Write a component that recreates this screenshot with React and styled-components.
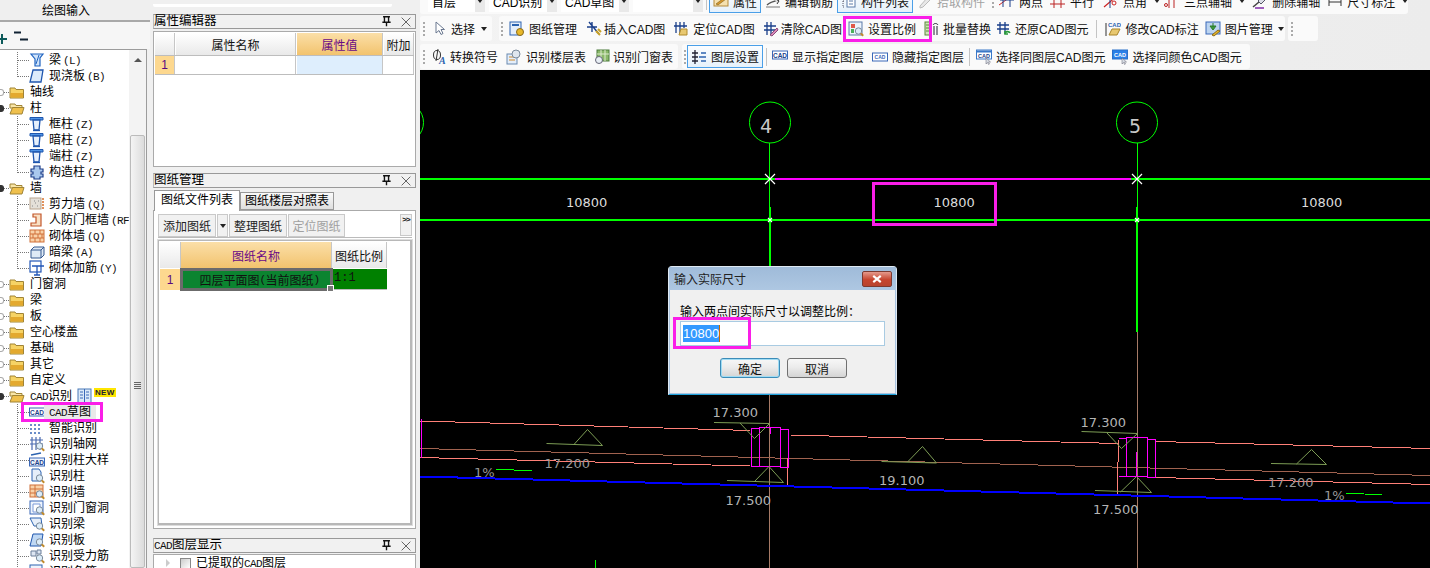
import React from 'react';
import styled, { createGlobalStyle } from 'styled-components';

const SANS = '"Liberation Sans","Noto Sans CJK SC",sans-serif';

const Global = createGlobalStyle`
  * { box-sizing: border-box; }
  html, body { margin: 0; padding: 0; background: #f0f0f0; }
  body { font-family: ${SANS}; font-size: 12px; color: #000; }
`;

const Screen = styled.div`
  position: relative; width: 1430px; height: 568px; overflow: hidden;
  display: grid; grid-template-columns: 150px 270px 1010px; background: #f0f0f0;
`;

/* ---------- icons ---------- */
const Ico = styled.svg`flex: none; display: block;`;
const I = ({ children, s = 16 }) => <Ico width={s} height={s} viewBox="0 0 16 16">{children}</Ico>;

const Mag = () => (
  <g>
    <circle cx="10.5" cy="10" r="3.2" fill="#dcecf8" stroke="#7a8a9a" />
    <path d="M12.8 12.4l2.4 2.4" stroke="#c08a2a" strokeWidth="2" />
  </g>
);
const CadTag = ({ fill = '#fff', ink = '#1a3f8a', y = 5 }) => (
  <g>
    <rect x="0.5" y={y} width="15" height="8" fill={fill} stroke="#3a68b8" />
    <text x="8" y={y + 6.5} fontSize="6.5" fontWeight="700" textAnchor="middle" fill={ink} fontFamily="Liberation Sans">CAD</text>
  </g>
);
const icons = {
  folder: <><path d="M1 4h5l1 1.5h7.5V14H1z" fill="#f6d365" stroke="#a08436" /><rect x="1.5" y="9" width="12.5" height="4.5" fill="#e3a92e" /></>,
  open: <><path d="M1 4h5l1 1.5h6V8H1z" fill="#f9e6a8" stroke="#a08436" /><path d="M1 14l2.5-6.5H15L13 14z" fill="#efc04d" stroke="#a08436" /></>,
  beam: <><path d="M2 2h12l-3 4v8H6V7z" fill="#cfe3fa" stroke="#1f63c0" strokeWidth="1.2" /><path d="M10 3l-3 9" stroke="#1f63c0" /></>,
  slab: <path d="M4 2h10l-2 12H1z" fill="#dcebfb" stroke="#1f56ae" strokeWidth="1.3" />,
  column: <><path d="M1 1.500h13v2.500H1z" fill="#4f94e6" stroke="#1f56ae" /><path d="M4 4h7l-1 10H5z" fill="#e6f0fc" stroke="#1f56ae" strokeWidth="1.3" /><path d="M4 14.500h7" stroke="#1f56ae" strokeWidth="1.3" /></>,
  struct: <path d="M5 2h6v3h3v3h-2v2h2v3h-3v2H5v-2H2v-3h2V8H2V5h3z" fill="#a9c8ee" stroke="#1f3f8a" strokeWidth="1.2" />,
  shear: <><rect x="1" y="2" width="11" height="11" fill="#e4e0d8" stroke="#b9a58e" /><path d="M3 10h1M6 7h1M8 10h1M5 5h1M9 5h1" stroke="#888" /><path d="M14 2v11" stroke="#d9702a" strokeDasharray="2 1" strokeWidth="1.5" /></>,
  door: <path d="M4 2h8v12H2v-3h5V5H4z" fill="#f9e0c4" stroke="#c2562a" strokeWidth="1.2" />,
  brick: <><rect x="1" y="2" width="14" height="12" fill="#f9d2a8" stroke="#d0703a" /><path d="M1 6h14M1 10h14M6 2v4M11 2v4M4 6v4M9 6v4M13 6v4M6 10v4M11 10v4" stroke="#d0703a" /></>,
  hbeam: <><path d="M2 6l3-3h10v8l-3 3H2z" fill="#dfeaf6" stroke="#34598f" /><path d="M2 6h10v8M12 6l3-3" stroke="#34598f" fill="none" /></>,
  rebar: <><rect x="1" y="1" width="11" height="11" fill="#fff" stroke="#2256b6" strokeWidth="1.2" /><path d="M3 6h12M8 6v9M5 15h6" stroke="#2256b6" strokeWidth="1.3" /></>,
  cad: <CadTag y={4} />,
  smart: <path d="M1 5h2M5 5h2M9 5h2M1 9h2M5 9h2M9 9h2M1 13h2M5 13h2M9 13h2" stroke="#3a68b8" strokeWidth="1.6" />,
  gridm: <><path d="M3 1v13M7 1v13M11 1v13M1 4h13M1 8h13" stroke="#4a6ab0" strokeWidth="1.2" /><Mag /></>,
  cadm: <><path d="M2 3l10-2" stroke="#2c63b0" strokeWidth="1.5" /><CadTag y={6} fill="#eef4fc" /></>,
  colm: <><path d="M3 1h7l2 3v9H3z" fill="#e6effa" stroke="#2c63b0" /><Mag /></>,
  wallm: <><rect x="1" y="1" width="13" height="12" fill="#f9d2a8" stroke="#d0703a" /><path d="M1 5h13M1 9h13M6 1v12" stroke="#d0703a" /><Mag /></>,
  doorm: <><rect x="1" y="1" width="13" height="13" fill="#eef4fc" stroke="#3a68b8" /><path d="M4 4h7v8H4z" fill="#fff" stroke="#7a9ad8" /><Mag /></>,
  beamm: <><path d="M1 2h11l1 8-8 0z" fill="#e6effa" stroke="#2c63b0" /><Mag /></>,
  slabm: <><path d="M4 2h10l-2 12H1z" fill="#bfd8f4" stroke="#1f56ae" /><Mag /></>,
  barm: <><path d="M2 3h5v5H2zM8 2h4v4H8z" fill="#dde6f2" stroke="#6a7f9a" /><Mag /></>,
  negm: <><rect x="1" y="1" width="12" height="13" fill="#eef4fc" stroke="#2c63b0" /><path d="M1 5h12" stroke="#2c63b0" /><Mag /></>,
  /* toolbar */
  attr: <><rect x="1" y="3" width="14" height="10" fill="#f5e1b0" stroke="#b58a3a" /><path d="M3 11l8-6 2 1-8 6z" fill="#d99a2e" stroke="#7a5a1a" strokeWidth=".6" /></>,
  steel: <><path d="M2 12c3-3 7-4 12-5" stroke="#555" fill="none" strokeWidth="1.3" /><path d="M9 5l5 3-2 3" stroke="#333" fill="#ddd" /><path d="M1 14h14" stroke="#777" /></>,
  list: <><path d="M2 2v12M2 2h2M2 8h2M2 14h2" stroke="#556" strokeDasharray="1 1" /><rect x="6" y="2" width="8" height="12" fill="#fff" stroke="#5a7aa8" /><path d="M8 5h4M8 8h4M8 11h4" stroke="#5a7aa8" /></>,
  pick: <path d="M3 13l8-9 3 2-8 8-3 1z" fill="#e8e8e8" stroke="#bbb" />,
  twopt: <><path d="M0 12L14 2" stroke="#c22" /><path d="M4 2v12M11 2v12M1 7h14" stroke="#1a3f8a" /></>,
  par: <path d="M4 1v14M11 1v14M0 5h15M0 11h15" stroke="#b22" />,
  ang: <><path d="M1 14L14 3" stroke="#c22" strokeWidth="1.2" /><path d="M7 1v14" stroke="#1a3f8a" /><circle cx="11" cy="10" r="2" fill="none" stroke="#c22" /></>,
  three: <><path d="M5 1v14M10 1v14M1 5h14" stroke="#b22" /><circle cx="2" cy="12" r="1.5" fill="none" stroke="#b22" /></>,
  delaux: <><path d="M1 14l6-5" stroke="#444" strokeWidth="1.6" /><path d="M6 8l6-6 3 3-6 6z" fill="#dcdfe8" stroke="#556" /><path d="M3 15h9" stroke="#8a3ab0" strokeWidth="1.6" /></>,
  dim: <><path d="M2 4v9M14 4v9M2 9h12" stroke="#333" /><circle cx="2" cy="2" r="1" fill="#2a9a3a" /><circle cx="14" cy="2" r="1" fill="#2a9a3a" /></>,
  cursor: <path d="M5 1v11l3-2.500 2 4 2-1-2-4h3.500z" fill="#fff" stroke="#6a7890" />,
  mgr: <><rect x="1" y="1" width="11" height="13" fill="#e4eefa" stroke="#2c63b0" /><path d="M3 4h7" stroke="#2c63b0" strokeWidth="2" /><circle cx="11" cy="11" r="3.500" fill="#e8b82a" stroke="#8a6a1a" /></>,
  insert: <><path d="M3 1l10 12M1 6h10M6 1v10" stroke="#1a3f8a" strokeWidth="1.400" /><path d="M10 10l4 4M12 8l3 3" stroke="#c8a22a" strokeWidth="2" /></>,
  locate: <><path d="M3 1v11M7 1v11M11 1v6M1 5h13" stroke="#1a3f8a" strokeWidth="1.300" /><path d="M8 8h6v6H6z" fill="#e8c870" stroke="#b08a2a" /></>,
  clear: <><path d="M4 1v13M8 1v13M1 5h12M1 9h12" stroke="#1a3f8a" strokeWidth="1.300" /><path d="M7 14l7-7 1 2-6 6z" fill="#d88ab8" stroke="#8a4a7a" /></>,
  scale: <><rect x="1" y="1" width="13" height="13" fill="#eef4fc" stroke="#5a7aa8" /><rect x="3" y="3" width="4" height="4" fill="#e05a4a" /><rect x="3" y="8" width="3" height="4" fill="#4ab05a" /><Mag /></>,
  batch: <><rect x="2" y="1" width="6" height="13" fill="#cfe5b8" stroke="#5a8a3a" /><path d="M3 4h4M3 7h4M3 10h4" stroke="#5a8a3a" /><path d="M11 5v9M14 5v9M10 4c1-2 4-2 5 0" stroke="#223" fill="none" /></>,
  restore: <><path d="M4 1v12M9 1v12M1 4h12M1 8h12" stroke="#1a3f8a" strokeWidth="1.300" /><path d="M9 13c0-3 4-3 5-1M9 10v3h3" stroke="#2a9a3a" strokeWidth="1.600" fill="none" /></>,
  modify: <><text x="3" y="6" fontSize="6" fontWeight="700" fill="#2c63b0" fontFamily="Liberation Sans">CAD</text><path d="M1 2v13" stroke="#333" /><path d="M4 14l3-6h8l-3 6z" fill="#e8c870" stroke="#a8842a" /></>,
  pic: <><rect x="1" y="1" width="14" height="12" fill="#bcd4f0" stroke="#3a68b8" /><path d="M8 2v4M5 5l3 4 3-4z" fill="#3a9a3a" stroke="#2a7a2a" /><path d="M7 14l6-5 2 1-6 5z" fill="#e8b82a" stroke="#8a6a1a" /></>,
  symbol: <><ellipse cx="6" cy="6" rx="3.500" ry="4.500" fill="none" stroke="#333" /><path d="M7 0L5 12" stroke="#333" /><text x="8" y="15" fontSize="10" fontWeight="700" fontStyle="italic" fill="#2c63b0" fontFamily="Liberation Serif">A</text></>,
  floor: <><rect x="1" y="5" width="10" height="10" fill="#e4eefa" stroke="#6a8ab0" /><path d="M3 8h6M3 11h6" stroke="#d08a2a" /><circle cx="10" cy="5" r="4" fill="#dfe6ee" stroke="#7a8a9a" /></>,
  doort: <><rect x="3" y="1" width="12" height="11" fill="#8ab86a" stroke="#4a7a3a" /><path d="M7 1v11M11 1v11M3 5h12" stroke="#dfeccf" /><circle cx="5" cy="11" r="3.500" fill="#e8eef4" stroke="#667" /></>,
  layer: <><path d="M1 4h6M1 8h6M1 12h6M4 1v14" stroke="#223" strokeWidth="1.300" /><path d="M10 4h5M8 8h7M10 12h5" stroke="#2c63b0" strokeWidth="1.300" /></>,
  show: <CadTag y={2} />,
  hide: <g><rect x="0.500" y="4" width="15" height="8" fill="#fff" stroke="#3a68b8" /><text x="8" y="10" fontSize="5" fontWeight="700" textAnchor="middle" fill="#3a68b8" fontFamily="Liberation Sans">CAD</text></g>,
  sell: <><rect x="0.500" y="1" width="15" height="9" fill="#fff" stroke="#3a78c8" /><rect x="1" y="1.500" width="14" height="2" fill="#3a78c8" /><text x="8" y="9" fontSize="5.500" fontWeight="700" textAnchor="middle" fill="#1a3f8a" fontFamily="Liberation Sans">CAD</text><path d="M10 9v6l1.500-1.500 1 2 1-.500-1-2h2z" fill="#d8dde4" stroke="#667" strokeWidth=".5" /></>,
  selc: <><rect x="0.500" y="1" width="15" height="9" fill="#2a80e8" stroke="#2a70c8" /><text x="8" y="8" fontSize="5.500" fontWeight="700" textAnchor="middle" fill="#fff" fontFamily="Liberation Sans">CAD</text><path d="M10 9v6l1.500-1.500 1 2 1-.500-1-2h2z" fill="#d8dde4" stroke="#667" strokeWidth=".5" /></>,
  book: <><rect x="1" y="1" width="13" height="14" fill="#dbe9f8" stroke="#4a7ab8" /><path d="M7.500 1v14M3 4h3M3 7h3M3 10h3M9 4h3M9 7h3M9 10h3" stroke="#3a68b8" /></>,
};
const Icon = ({ n }) => <I>{icons[n]}</I>;

/* ---------- left tree ---------- */
const LeftPane = styled.section`display: flex; flex-direction: column; height: 568px; background: #f0f0f0;`;
const PaneHead = styled.header`
  height: 22px; line-height: 23px; padding-left: 42px; font-size: 12px;
  background: #efefef; border-bottom: 2px solid #a9a9a9;
`;
const TreeTools = styled.div`
  height: 27px; padding-top: 6px; display: flex; align-items: center; gap: 6px; background: #f6f6f6; margin-left: -3px;
`;
const TreeFrame = styled.div`
  display: flex; flex: 1; min-height: 0; border-top: 1px solid #9c9c9c; border-right: 1px solid #9c9c9c; margin-right: 3px; background: #fff;
`;
const TreeList = styled.ul`
  list-style: none; margin: 0; padding: 2px 0 0; width: 129px; overflow: hidden; flex: none; background: #fff;
`;
const TreeRow = styled.li`
  height: 16px; display: flex; align-items: center; white-space: nowrap; font-size: 12px; line-height: 16px;
  padding-left: ${p => (p.$lvl ? '17px' : '0')};
  background-image: ${p => (p.$lvl ? 'repeating-linear-gradient(to bottom,#777 0 1px,transparent 1px 2px)' : 'none')};
  background-size: 1px ${p => (p.$last ? '8px' : '16px')};
  background-position: 17px 0; background-repeat: no-repeat;
`;
const Expander = styled.span`
  flex: none; width: 5px; height: 7px;
  background: ${p => (p.$open ? '#333' : 'transparent')};
  border: 1px solid ${p => (p.$open ? '#333' : '#aaa')};
  border-left: none; margin-left: -1px; border-radius: 0 3px 3px 0;
`;
const Dots = styled.span`
  flex: none; width: ${p => p.$w}px; height: 0; border-top: 1px dotted #777;
`;
const Label = styled.span`
  margin-left: ${p => (p.$sel ? '-1px' : p.$lvl ? '4px' : '5px')}; padding: ${p => (p.$sel ? '0 5px' : '0')};
  background: ${p => (p.$sel ? '#e9e9e9' : 'transparent')};
`;
const Mono = styled.span`
  font-family: "Liberation Mono","DejaVu Sans Mono",monospace; font-size: 11px; letter-spacing: -0.6px; color: #111;
  margin-left: ${p => p.$ml || 0}px;
`;
const NewTag = styled.span`
  margin-left: 1px; margin-top: -7px; height: 9px; padding: 0 1px; background: #ffe600; color: #223;
  font-size: 8px; line-height: 9px; font-weight: 700; letter-spacing: .3px; font-family: ${SANS};
`;
const BookWrap = styled.span`margin-left: 5px; display: flex;`;
const Scroll = styled.div`
  flex: none; width: 17px; background: #f3f3f3; display: flex; flex-direction: column; align-items: center;
`;
const ScrollUp = styled.div`
  margin-top: 8px; width: 0; height: 0; border: 4px solid transparent; border-top: none; border-bottom: 4px solid #555;
`;
const ScrollThumb = styled.div`
  margin-top: 73px; width: 15px; flex: 1; background: linear-gradient(90deg,#f4f4f4,#dcdcdc); border: 1px solid #bbb; border-radius: 2px;
  display: flex; justify-content: center; padding-top: 246px;
`;
const ThumbGrip = styled.div`
  width: 7px; height: 7px; background: repeating-linear-gradient(to bottom,#666 0 1px,transparent 1px 2px);
`;

const L = (text, code) => <>{text}{code && <Mono $ml={2}>{code}</Mono>}</>;
const tree = [
  { l: 1, i: 'beam', t: L('梁', '(L)') }, { l: 1, i: 'slab', t: L('现浇板', '(B)'), last: 1 },
  { l: 0, i: 'folder', t: '轴线' }, { l: 0, i: 'open', t: '柱', o: 1 },
  { l: 1, i: 'column', t: L('框柱', '(Z)') }, { l: 1, i: 'column', t: L('暗柱', '(Z)') }, { l: 1, i: 'column', t: L('端柱', '(Z)') },
  { l: 1, i: 'struct', t: L('构造柱', '(Z)'), last: 1 },
  { l: 0, i: 'open', t: '墙', o: 1 },
  { l: 1, i: 'shear', t: L('剪力墙', '(Q)') }, { l: 1, i: 'door', t: L('人防门框墙', '(RF)') }, { l: 1, i: 'brick', t: L('砌体墙', '(Q)') },
  { l: 1, i: 'hbeam', t: L('暗梁', '(A)') }, { l: 1, i: 'rebar', t: L('砌体加筋', '(Y)'), last: 1 },
  { l: 0, i: 'folder', t: '门窗洞' }, { l: 0, i: 'folder', t: '梁' }, { l: 0, i: 'folder', t: '板' }, { l: 0, i: 'folder', t: '空心楼盖' },
  { l: 0, i: 'folder', t: '基础' }, { l: 0, i: 'folder', t: '其它' }, { l: 0, i: 'folder', t: '自定义' },
  { l: 0, i: 'open', t: <><Mono>CAD</Mono>识别</>, o: 1, badge: 1 },
  { l: 1, i: 'cad', t: <><Mono>CAD</Mono>草图</>, sel: 1 },
  { l: 1, i: 'smart', t: '智能识别' }, { l: 1, i: 'gridm', t: '识别轴网' }, { l: 1, i: 'cadm', t: '识别柱大样' }, { l: 1, i: 'colm', t: '识别柱' },
  { l: 1, i: 'wallm', t: '识别墙' }, { l: 1, i: 'doorm', t: '识别门窗洞' }, { l: 1, i: 'beamm', t: '识别梁' }, { l: 1, i: 'slabm', t: '识别板' },
  { l: 1, i: 'barm', t: '识别受力筋' }, { l: 1, i: 'negm', t: '识别负筋' },
];

const LeftColumn = () => (
  <LeftPane>
    <PaneHead>绘图输入</PaneHead>
    <TreeTools>
      <I s={10}><path d="M8 0v16M0 8h16" stroke="#0d5a5a" strokeWidth="3.200" /></I>
      <I s={16}><path d="M1 1.500h7M7 8.500h8" stroke="#123" strokeWidth="2" /></I>
    </TreeTools>
    <TreeFrame>
      <TreeList>
        {tree.map((r, k) => (
          <TreeRow key={k} $lvl={r.l} $last={r.last}>
            {r.l ? <Dots $w={12} /> : <><Expander $open={r.o} /><Dots $w={5} /></>}
            <Icon n={r.i} />
            <Label $sel={r.sel} $lvl={r.l}>{r.t}</Label>
            {r.badge && <><BookWrap><Icon n="book" /></BookWrap><NewTag>NEW</NewTag></>}
          </TreeRow>
        ))}
      </TreeList>
      <Scroll>
        <ScrollUp />
        <ScrollThumb><ThumbGrip /></ScrollThumb>
      </Scroll>
    </TreeFrame>
  </LeftPane>
);

/* ---------- middle panels ---------- */
const MidPane = styled.section`
  height: 568px; padding: 4px 4px 0 3px; display: flex; flex-direction: column; background: #f0f0f0;
`;
const Sliver = styled.div`height: 3px; width: 239px; background: #fff; border-radius: 0 0 2px 2px; margin-bottom: 7px; flex: none;`;
const DockTitle = styled.div`
  flex: none; height: 15px; line-height: 15px; display: flex; align-items: center; justify-content: space-between;
  border: 1px solid #999; background: #f1f1f1; font-size: 12.5px; padding-right: 4px; white-space: nowrap;
  margin-top: ${p => p.$mt || 0}px; border-left-color: #bbb;
`;
const DockBtns = styled.span`display: flex; align-items: center; gap: 9px;`;
const PropsBody = styled.div`
  flex: none; margin-top: 2px; height: 136px; background: #fff; border: 1px solid #aaa; padding: 1px;
`;
const GridRow = styled.div`
  display: grid; grid-template-columns: ${p => p.$cols}; height: ${p => p.$h}px; column-gap: 1px;
  border-bottom: 1px solid #bdbdbd;
`;
const Head = styled.div`
  display: flex; align-items: center; justify-content: center; font-size: 12px; overflow: hidden; white-space: nowrap;
  color: ${p => (p.$hot ? '#6a0a86' : '#111')};
  background: ${p => (p.$hot ? 'linear-gradient(#fbdfa8,#f2c36e)' : 'linear-gradient(#fff,#e9e9e9)')};
  border-right: 1px solid #c6c6c6;
`;
const Cell = styled.div`
  display: flex; align-items: center; justify-content: ${p => (p.$left ? 'flex-start' : 'center')};
  font-size: 12px; overflow: hidden; white-space: nowrap;
  color: ${p => p.$ink || '#111'}; background: ${p => p.$bg || '#fff'};
  border-right: 1px solid #c6c6c6;
`;
const TabRow = styled.div`flex: none; display: flex; align-items: flex-end; height: 20px; margin-top: 2px;`;
const Tab = styled.div`
  height: ${p => (p.$on ? 21 : 18)}px; margin-bottom: ${p => (p.$on ? -1 : 0)}px; line-height: ${p => (p.$on ? 19 : 17)}px;
  padding: 0 ${p => (p.$on ? 6 : 4)}px; font-size: 12px; position: relative; white-space: nowrap;
  background: ${p => (p.$on ? '#fff' : 'linear-gradient(#fafafa,#dedede)')};
  border: 1px solid #999; border-bottom: ${p => (p.$on ? 'none' : '1px solid #999')}; margin-left: ${p => (p.$on ? 1 : 0)}px;
`;
const DrawBody = styled.div`
  flex: none; height: 319px; background: #fff; border: 1px solid #aaa; padding: 3px 3px 3px 4px; display: flex; flex-direction: column;
`;
const DrawTools = styled.div`
  flex: none; height: 24px; display: flex; justify-content: space-between; border-bottom: 1px solid #bbb;
`;
const BtnGroup = styled.div`display: flex; gap: 1px;`;
const FlatBtn = styled.button`
  height: 23px; padding: 0 4px; font: 12px ${SANS}; border: 1px solid #c9c9c9; background: #f1f1f1;
  color: ${p => (p.disabled ? '#a0a0a0' : '#222')}; display: flex; align-items: center; justify-content: center;
  width: ${p => p.$w}px; white-space: nowrap;
`;
const DownTri = styled.span`
  width: 0; height: 0; border: 3px solid transparent; border-top: 4px solid #222; border-bottom: none; flex: none;
`;
const MoreBtn = styled.div`
  width: 12px; height: 22px; border: 1px solid #c9c9c9; background: #f1f1f1; font: 700 8px/10px "Liberation Sans",sans-serif; letter-spacing: -1px; text-align: center; color: #111;
`;
const DrawGrid = styled.div`
  flex: 1; margin-top: 2px; border: 2px solid #b8b8b8; border-width: 1px 2px 2px 1px; padding: 1px; background: #fff;
  outline: 1px solid #ddd;
`;
const HeadPlain = styled.div`
  display: grid; grid-template-columns: 21px 151px 55px; height: 26px; column-gap: 0;
`;
const DataRow = styled.div`
  display: grid; grid-template-columns: 21px 151px 55px; height: 19px; margin-top: 1px;
`;
const ActiveCell = styled.div`
  display: flex; align-items: center; justify-content: center; background: #0b8430; border: 2px solid #6b6b6b; outline: 1px solid #6b6b6b;
  font-size: 12px; color: #111; white-space: nowrap; position: relative; padding-left: 6px;
`;
const FillHandle = styled.i`
  position: absolute; right: -4px; bottom: -4px; width: 5px; height: 5px; background: #777; border: 1px solid #fff; box-sizing: content-box;
`;
const GreenCell = styled.div`
  background: #008000; font: 12px "Liberation Mono",monospace; padding-left: 2px; line-height: 18px; color: #111; border-bottom: 1px solid #bbb;
`;
const LayerBody = styled.div`
  flex: 1; margin-top: 1px; background: #fff; border: 1px solid #aaa; display: flex; padding: 0 0 0 12px; align-items: flex-start;
`;
const LayerTri = styled.span`
  margin-top: 4px; width: 0; height: 0; border: 4px solid transparent; border-left: 4px solid #ccc; border-right: none; flex: none;
`;
const CheckBox = styled.span`
  margin: 3px 5px 0 10px; width: 11px; height: 11px; border: 1px solid #888; background: linear-gradient(135deg,#ccc,#fff); flex: none;
`;
const LayerText = styled.span`font-size: 12px; line-height: 16px; white-space: nowrap;`;

const PinClose = () => (
  <DockBtns>
    <I s={11}><path d="M3 1h10M5 1v8M11 1v8M2 9h12M8 9v6" stroke="#111" strokeWidth="2" /></I>
    <I s={10}><path d="M1 1l14 14M15 1L1 15" stroke="#444" strokeWidth="1.300" /></I>
  </DockBtns>
);

const MidColumn = () => (
  <MidPane>
    <Sliver />
    <DockTitle>属性编辑器<PinClose /></DockTitle>
    <PropsBody>
      <GridRow $cols="20px 120px 86px 30px" $h={23}>
        <Head /><Head>属性名称</Head><Head $hot>属性值</Head><Head>附加</Head>
      </GridRow>
      <GridRow $cols="20px 120px 86px 30px" $h={19}>
        <Cell $bg="#fdd88f" $ink="#5a0a80">1</Cell><Cell /><Cell $bg="#deeefd" /><Cell />
      </GridRow>
    </PropsBody>
    <DockTitle $mt={6}>图纸管理<PinClose /></DockTitle>
    <TabRow>
      <Tab $on>图纸文件列表</Tab>
      <Tab>图纸楼层对照表</Tab>
    </TabRow>
    <DrawBody>
      <DrawTools>
        <BtnGroup>
          <FlatBtn $w={58}>添加图纸</FlatBtn>
          <FlatBtn $w={11}><DownTri /></FlatBtn>
          <FlatBtn $w={58}>整理图纸</FlatBtn>
          <FlatBtn $w={57} disabled>定位图纸</FlatBtn>
        </BtnGroup>
        <MoreBtn>&gt;&gt;</MoreBtn>
      </DrawTools>
      <DrawGrid>
        <HeadPlain>
          <Head /><Head $hot>图纸名称</Head><Head>图纸比例</Head>
        </HeadPlain>
        <DataRow>
          <Cell $bg="#fdd88f" $ink="#5a0a80">1</Cell>
          <ActiveCell>四层平面图<Mono>(</Mono>当前图纸<Mono>)</Mono><FillHandle /></ActiveCell>
          <GreenCell>1:1</GreenCell>
        </DataRow>
      </DrawGrid>
    </DrawBody>
    <DockTitle $mt={9}><span><Mono>CAD</Mono>图层显示</span><PinClose /></DockTitle>
    <LayerBody>
      <LayerTri /><CheckBox /><LayerText>已提取的<Mono>CAD</Mono>图层</LayerText>
    </LayerBody>
  </MidPane>
);

/* ---------- toolbars ---------- */
const RightPane = styled.section`height: 568px; display: flex; flex-direction: column; overflow: hidden;`;
const Row = styled.div`
  flex: none; height: ${p => p.$h || 28}px; display: flex; align-items: center; background: linear-gradient(90deg,#f3f3f3,#ececec);
  margin-top: ${p => p.$mt || 0}px; padding-top: ${p => p.$pt || 0}px;
`;
const Strip = styled.div`
  flex: none; height: 25px; display: flex; align-items: center; background: #fafafa; border-radius: 3px;
  width: ${p => (p.$w ? `${p.$w}px` : 'auto')}; margin-left: ${p => p.$ml || 0}px; padding-right: ${p => p.$pr || 0}px; padding-left: ${p => p.$pl || 0}px;
`;
const Grip = styled.span`
  flex: none; width: 2px; height: 14px; margin: 0 2px 0 ${p => p.$ml ?? 3}px;
  background: repeating-linear-gradient(to bottom,#aaa 0 2px,transparent 2px 4px);
`;
const Sep = styled.span`flex: none; width: 1px; height: 18px; background: #c4c4c4; margin: 0 ${p => p.$m ?? 3}px;`;
const Tool = styled.div`
  flex: none; height: 23px; display: flex; align-items: center; gap: ${p => p.$gap ?? 4}px; padding: 0 3px; white-space: nowrap; font-size: 12px;
  margin-left: ${p => p.$ml || 0}px;
  color: ${p => (p.$off ? '#a2a2a2' : '#111')};
  border: 1px solid ${p => (p.$on ? '#4a9fe8' : 'transparent')};
  background: ${p => (p.$on ? 'linear-gradient(#fbfdff,#e6f1fb)' : 'transparent')};
`;
const Combo = styled.div`
  flex: none; width: ${p => p.$w}px; height: 22px; background: #fff; display: flex; justify-content: space-between; align-items: center;
  padding-left: 4px; font-size: 12px; margin-left: ${p => p.$ml ?? 4}px; white-space: nowrap;
`;
const ComboBtn = styled.span`
  align-self: stretch; width: 10px; background: #e9e9e9; display: flex; align-items: center; justify-content: center;
`;
const ToolDown = styled(DownTri)`margin-left: ${p => p.$ml ?? 3}px;`;

const T = ({ n, t, ...p }) => <Tool {...p}><Icon n={n} /><span>{t}</span></Tool>;

const Toolbars = () => (
  <>
    <Row $mt={-13}>
      <Strip $pl={4}>
        <Combo $w={57}>首层<ComboBtn><DownTri /></ComboBtn></Combo>
        <Combo $w={68}>CAD识别<ComboBtn><DownTri /></ComboBtn></Combo>
        <Combo $w={68}>CAD草图<ComboBtn><DownTri /></ComboBtn></Combo>
        <Combo $w={70}><span /><ComboBtn><DownTri /></ComboBtn></Combo>
        <Sep />
        <T n="attr" t="属性" $on $ml={-1} />
        <T n="steel" t="编辑钢筋" />
        <T n="list" t="构件列表" $on />
        <T n="pick" t="拾取构件" $off />
        <Grip />
        <T n="twopt" t="两点" $ml={-1} />
        <T n="par" t="平行" $ml={-1} />
        <T n="ang" t="点角" $ml={1} /><ToolDown />
        <T n="three" t="三点辅轴" $ml={0} /><ToolDown />
        <T n="delaux" t="删除辅轴" $ml={3} />
        <T n="dim" t="尺寸标注" $ml={-1} /><ToolDown />
      </Strip>
    </Row>
    <Row $h={27}>
      <Strip $w={72}>
        <Grip />
        <T n="cursor" t="选择" $ml={0} /><ToolDown $ml={2} />
      </Strip>
      <Strip $ml={7} $w={786}>
        <Grip $ml={2} />
        <T n="mgr" t="图纸管理" />
        <T n="insert" t="插入CAD图" $gap={2} $ml={1} />
        <T n="locate" t="定位CAD图" />
        <T n="clear" t="清除CAD图" $gap={2} />
        <T n="scale" t="设置比例" $ml={-2} />
        <T n="batch" t="批量替换" $ml={-1} />
        <T n="restore" t="还原CAD图元" $ml={-3} $gap={3} />
        <Sep $m={4} />
        <T n="modify" t="修改CAD标注" />
        <T n="pic" t="图片管理" $ml={-2} /><ToolDown $ml={1} />
      </Strip>
      <Strip $ml={3} $w={30}><Grip /></Strip>
    </Row>
    <Row $h={28} $pt={1}>
      <Strip $w={258}>
        <Grip />
        <T n="symbol" t="转换符号" $gap={3} />
        <T n="floor" t="识别楼层表" />
        <T n="doort" t="识别门窗表" $gap={3} />
      </Strip>
      <Strip $ml={4} $pr={4}>
        <Grip $ml={2} />
        <T n="layer" t="图层设置" $on $ml={-1} />
        <Sep $m={3} />
        <T n="show" t="显示指定图层" $ml={-2} />
        <T n="hide" t="隐藏指定图层" />
        <Sep $m={1} />
        <T n="sell" t="选择同图层CAD图元" $ml={1} />
        <T n="selc" t="选择同颜色CAD图元" $ml={-1} />
      </Strip>
    </Row>
  </>
);

/* ---------- CAD canvas ---------- */
const Canvas = styled.div`flex: 1; position: relative; background: #000; overflow: hidden;`;
const Drawing = styled.svg`display: block;`;

const SALMON = '#ff8078', BROWN = '#a0624f', MAG = '#ff00ff', OLIVE = '#7d9d55', GRN = '#00ff00', BLUE = '#0000ff';

const Ln = ({ d, c, w = 1 }) => <path d={d} stroke={c} strokeWidth={w} fill="none" shapeRendering="crispEdges" />;
const Thin = ({ d, c = OLIVE }) => <path d={d} stroke={c} strokeWidth="1" fill="none" />;
const Lbl = ({ x, y, t, c = '#b4b4b4' }) => (
  <text x={x} y={y} fill={c} fontSize="13" fontFamily="DejaVu Sans">{t}</text>
);
const Cross = ({ x, y, r, c = '#fff' }) => (
  <path d={`M${x - r} ${y - r}L${x + r} ${y + r}M${x + r} ${y - r}L${x - r} ${y + r}`} stroke={c} strokeWidth="1.200" />
);

const CadDrawing = () => (
  <Drawing width="1010" height="498" viewBox="420 70 1010 498">
    {[403, 770, 1137].map(x => <circle key={x} cx={x} cy="122.500" r="20.500" fill="none" stroke={GRN} strokeWidth="1" />)}
    <text x="760" y="133" fill="#c8c8c8" fontSize="19" fontFamily="DejaVu Sans">4</text>
    <text x="1129" y="133" fill="#c8c8c8" fontSize="19" fontFamily="DejaVu Sans">5</text>

    <Ln d="M420 179H1430" c={GRN} w={2} />
    <Ln d="M420 220H1430" c={GRN} w={2} />
    <Ln d="M775 179H1131" c={MAG} w={2} />
    <Ln d="M769.500 143V208M1137.500 143V208" c={GRN} />
    <Ln d="M770 207V266M1137 207V332" c={GRN} w={2} />
    <Ln d="M769.500 395V568M1137.500 332V568" c="#a67a66" />
    <Cross x={770} y={179} r={5} />
    <Cross x={1137} y={179} r={5} />
    <Cross x={770} y={220} r={2} />
    <Cross x={1137} y={220} r={2} />
    <Lbl x={566} y={207} t="10800" c="#dcdcdc" />
    <Lbl x={933.500} y={207} t="10800" c="#dcdcdc" />
    <Lbl x={1301} y={207} t="10800" c="#dcdcdc" />

    <Ln d="M420 448.500L1430 475.500" c={BROWN} />
    <Ln d="M420 421L750 430.500M790 435L1118 443.500M1156 441.500L1430 448.500" c={SALMON} />
    <Ln d="M420 457.500L750 466M1156 477.500L1430 484.500" c={SALMON} />
    <Ln d="M420 476.500L1430 503.500" c={BLUE} w={2} />
    <Ln d="M787.500 458V485M1117.500 462V494M1118.500 440V462" c={SALMON} />

    <Ln d="M751.500 428.500H759.500V466.500H751.500zM759.500 427.500H780.500V466.500H759.500zM780.500 429.500H788.500V467.500H780.500zM770.500 427V434M421 419V458" c={MAG} />
    <Ln d="M1118.500 476.500H1126.500M1118.500 438.500H1126.500M1126.500 437.500H1147.500V476.500H1126.500zM1147.500 439.500H1155.500V477.500H1147.500zM1136.500 452V477" c={MAG} />

    <Thin d="M714 422.500L769.500 423.500L754.500 438.500L740 423" />
    <Thin d="M727 480.500L783.500 482.500L769 466.500L754 482" />
    <Thin d="M546.500 443.500L602.500 445.500L587.500 429.500L573.500 445" />
    <Thin d="M881.500 461.500L936.500 463L922.500 446.500L907.500 462" />
    <Thin d="M1081.500 431.500L1137.500 433.500L1121.500 448.500L1107 433" />
    <Thin d="M1095 490.500L1151.500 492.500L1136.500 476.500L1120.500 492" />
    <Thin d="M1271 463.500L1326.500 464.500L1311.500 449.500L1296.500 464" />

    <Ln d="M496 469.500L532 470.500" c={GRN} />
    <Ln d="M1346 493.500L1382 494.500" c={GRN} />
    <Ln d="M595.500 560V568" c={GRN} />

    <Lbl x={712.500} y={417} t="17.300" />
    <Lbl x={725.500} y={504.500} t="17.500" />
    <Lbl x={544.500} y={467.500} t="17.200" c="#999" />
    <Lbl x={474} y={477} t="1%" c="#999" />
    <Lbl x={879} y={485} t="19.100" />
    <Lbl x={1080.500} y={427} t="17.300" />
    <Lbl x={1093} y={514} t="17.500" />
    <Lbl x={1268} y={487} t="17.200" c="#999" />
    <Lbl x={1324} y={500} t="1%" c="#999" />
  </Drawing>
);

/* ---------- dialog ---------- */
const Dialog = styled.div`
  position: absolute; left: 248px; top: 196px; width: 229px; height: 129px; display: flex; flex-direction: column;
  background: #a9c3df; border: 1px solid #dfe9f3; border-bottom-color: #1fa3dc; border-radius: 4px 4px 0 0;
`;
const DlgTitle = styled.div`
  flex: none; height: 23px; display: flex; align-items: center; justify-content: space-between; padding: 0 4px 0 5px; font-size: 12px; color: #222;
  background: linear-gradient(#9fbbd9,#aec7e2);
`;
const DlgClose = styled.button`
  width: 30px; height: 16px; padding: 0; border: 1px solid #7d3a30; border-radius: 2px; display: flex; align-items: center; justify-content: center;
  background: linear-gradient(#e59a8c,#c6452f 55%,#b8442f);
`;
const DlgBody = styled.div`
  flex: 1; background: #f0f0f0; margin: 0 1px 1px; padding: 14px 10px 0; display: flex; flex-direction: column;
`;
const DlgLabel = styled.div`font-size: 12px; line-height: 16px; white-space: nowrap;`;
const DlgInput = styled.div`
  margin-top: 1px; height: 25px; width: 205px; background: #fff; border: 1px solid #a9cbe2; padding: 2px; display: flex; align-items: center;
`;
const Selected = styled.span`
  background: #3399ff; color: #fff; font: 13px "Liberation Sans",sans-serif; line-height: 17px; border-right: 1px solid #c96a00;
`;
const DlgBtns = styled.div`display: flex; gap: 7px; margin: 12px 0 0 40px;`;
const DlgBtn = styled.button`
  width: 60px; height: 20px; padding: 0; border-radius: 3px; font: 12px ${SANS}; color: #111;
  background: linear-gradient(#f7f7f7,#ececec 45%,#d4d4d4);
  border: 1px solid ${p => (p.$def ? '#3c8cb8' : '#707070')};
  box-shadow: ${p => (p.$def ? 'inset 0 0 0 1px #9fdcf4' : 'none')};
`;

/* ---------- magenta callouts ---------- */
const Callout = styled.div`
  position: absolute; border: 3px solid #fa1ee8; pointer-events: none;
  left: ${p => p.$x}px; top: ${p => p.$y}px; width: ${p => p.$w}px; height: ${p => p.$h}px;
`;

export default function App() {
  return (
    <>
      <Global />
      <Screen>
        <LeftColumn />
        <MidColumn />
        <RightPane>
          <Toolbars />
          <Canvas>
            <CadDrawing />
            <Dialog>
              <DlgTitle>
                输入实际尺寸
                <DlgClose aria-label="close">
                  <I s={10}><path d="M2 3l12 10M14 3L2 13" stroke="#fff" strokeWidth="3.400" /></I>
                </DlgClose>
              </DlgTitle>
              <DlgBody>
                <DlgLabel>输入两点间实际尺寸以调整比例：</DlgLabel>
                <DlgInput><Selected>10800</Selected></DlgInput>
                <DlgBtns>
                  <DlgBtn $def>确定</DlgBtn>
                  <DlgBtn>取消</DlgBtn>
                </DlgBtns>
              </DlgBody>
            </Dialog>
          </Canvas>
        </RightPane>
        <Callout $x={21} $y={402} $w={82} $h={20} />
        <Callout $x={843} $y={16} $w={89} $h={26} />
        <Callout $x={872} $y={182} $w={125} $h={44} />
        <Callout $x={673} $y={317} $w={78} $h={32} />
      </Screen>
    </>
  );
}
